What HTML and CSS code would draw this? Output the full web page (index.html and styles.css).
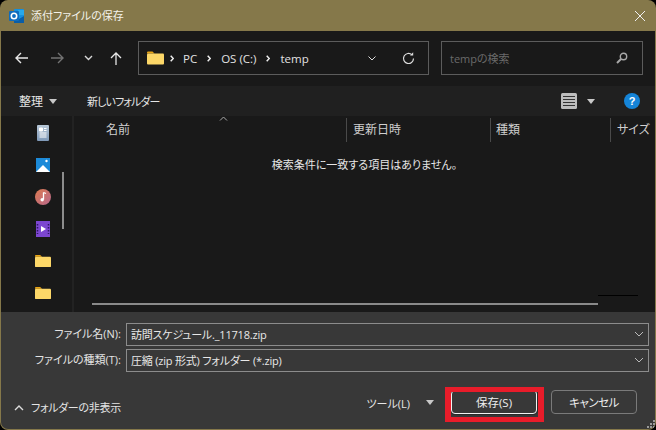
FILE: index.html
```html
<!DOCTYPE html>
<html lang="ja">
<head>
<meta charset="utf-8">
<title>添付ファイルの保存</title>
<link rel="stylesheet" href="styles.css">
</head>
<body>
<div class="window">
  <header class="titlebar">
    <svg class="app-icon" width="17" height="16" viewBox="0 0 17 16">
      <rect x="6" y="1" width="10" height="14" rx="1" fill="#1490df"/>
      <rect x="10" y="2" width="6" height="5" fill="#28a8ea"/>
      <path d="M6 8l5 3 5-3v7H6z" fill="#0a5ea8"/>
      <rect x="1" y="3" width="10" height="10" rx="1" fill="#0f6cbd"/>
      <circle cx="6" cy="8" r="2.7" fill="none" stroke="#fff" stroke-width="1.6"/>
    </svg>
    <span class="title">添付ファイルの保存</span>
    <svg class="close" width="12" height="12" viewBox="0 0 12 12"><path d="M1 1l10 10M11 1L1 11" stroke="#f0f0f0" stroke-width="1"/></svg>
  </header>

  <nav class="navbar">
    <div class="nav-buttons">
      <svg class="nav-b" width="14" height="12" viewBox="0 0 14 12"><path d="M13 6H1M6 1L1 6l5 5" fill="none" stroke="#e8e8e8" stroke-width="1.4"/></svg>
      <svg class="nav-f" width="14" height="12" viewBox="0 0 14 12"><path d="M1 6h12M8 1l5 5-5 5" fill="none" stroke="#737373" stroke-width="1.4"/></svg>
      <svg class="nav-d" width="9" height="6" viewBox="0 0 9 6"><path d="M1 1l3.5 3.5L8 1" fill="none" stroke="#d8d8d8" stroke-width="1.4"/></svg>
      <svg class="nav-u" width="12" height="13" viewBox="0 0 12 13"><path d="M6 13V1M1 6l5-5 5 5" fill="none" stroke="#e8e8e8" stroke-width="1.3"/></svg>
    </div>
    <div class="address">
      <svg class="folder-sm" width="17" height="14" viewBox="0 0 17 14"><path d="M0 1.500Q0 .5 1 .5h4.500l2 2H0z" fill="#e8a415"/><rect y="2.500" width="17" height="11" rx="1" fill="#fcd768"/></svg>
      <svg class="crumb-sep first" width="4" height="7" viewBox="0 0 4 7"><path d="M.7.7L3.300 3.500.7 6.300" fill="none" stroke="#eee" stroke-width="1.500"/></svg>
      <span class="crumb">PC</span>
      <svg class="crumb-sep" width="4" height="7" viewBox="0 0 4 7"><path d="M.7.7L3.300 3.500.7 6.300" fill="none" stroke="#eee" stroke-width="1.500"/></svg>
      <span class="crumb">OS (C:)</span>
      <svg class="crumb-sep" width="4" height="7" viewBox="0 0 4 7"><path d="M.7.7L3.300 3.500.7 6.300" fill="none" stroke="#eee" stroke-width="1.500"/></svg>
      <span class="crumb">temp</span>
      <svg class="addr-chev" width="8" height="5" viewBox="0 0 8 5"><path d="M.5.5L4 4 7.500.5" fill="none" stroke="#ddd" stroke-width="1"/></svg>
      <svg class="refresh" width="13" height="13" viewBox="0 0 13 13"><path d="M11.500 6.500a5 5 0 1 1-1.600-3.700" fill="none" stroke="#ddd" stroke-width="1.200"/><path d="M8 3.400h3.200V.2z" fill="#ddd"/></svg>
    </div>
    <div class="search">
      <span class="search-text">tempの検索</span>
      <svg width="12" height="12" viewBox="0 0 12 12"><circle cx="7.500" cy="4.500" r="3.200" fill="none" stroke="#a8a8a8" stroke-width="1.400"/><path d="M5 7L1 11" stroke="#a8a8a8" stroke-width="2"/></svg>
    </div>
  </nav>

  <div class="toolbar">
    <span class="organize">整理</span><span class="arrow tb-arrow"></span>
    <span class="newfolder">新しいフォルダー</span>
    <svg class="view" width="16" height="16" viewBox="0 0 16 16"><rect width="16" height="16" rx="1.500" fill="#bdbdbd"/><path d="M2 3.500h12M2 6.500h12M2 9.500h12M2 12.500h12" stroke="#333" stroke-width="1"/></svg>
    <span class="arrow view-arrow"></span>
    <span class="help">?</span>
  </div>

  <main class="content">
    <aside class="sidebar">
      <div class="side-icons">
        <svg width="12" height="16" viewBox="0 0 12 16"><defs><linearGradient id="doc" x1="0" y1="0" x2="0" y2="1"><stop offset="0" stop-color="#b8c8d8"/><stop offset="1" stop-color="#7f99b8"/></linearGradient></defs><rect width="12" height="16" rx="1" fill="url(#doc)"/><path d="M2.500 3h3v3h-3zM7 3.500h2.500M7 5.500h2.500M2.500 8h7M2.500 10h7M2.500 12h7" stroke="#fff" fill="#fff" stroke-width="1"/></svg>
        <svg width="14" height="14" viewBox="0 0 14 14"><rect width="14" height="14" fill="#1c8ad8"/><path d="M0 14l7-7 7 7z" fill="#fff"/><circle cx="10.500" cy="3" r="1.200" fill="#fff"/></svg>
        <svg width="16" height="16" viewBox="0 0 16 16"><defs><linearGradient id="mus" x1="0" y1="0" x2="1" y2="1"><stop offset="0" stop-color="#dc7a50"/><stop offset="1" stop-color="#b8688c"/></linearGradient></defs><circle cx="8" cy="8" r="8" fill="url(#mus)"/><path d="M8.500 3.500v7" stroke="#fff" stroke-width="1.300"/><circle cx="7.200" cy="10.800" r="1.700" fill="#fff"/><path d="M8.500 3.500l2.500 1" stroke="#fff" stroke-width="1.300"/></svg>
        <svg width="14" height="16" viewBox="0 0 14 16"><rect width="14" height="16" fill="#7c46d0"/><path d="M5 5l5 3-5 3z" fill="#fff"/><path d="M1.500 3v10M12.500 3v10" stroke="#2d1463" stroke-width="1.500" stroke-dasharray="1.500 1.500"/></svg>
        <svg width="16" height="13" viewBox="0 0 17 14"><path d="M0 1.500Q0 .5 1 .5h4.500l2 2H0z" fill="#e8a415"/><rect y="2.500" width="17" height="11" rx="1" fill="#fcd768"/></svg>
        <svg width="16" height="13" viewBox="0 0 17 14"><path d="M0 1.500Q0 .5 1 .5h4.500l2 2H0z" fill="#e8a415"/><rect y="2.500" width="17" height="11" rx="1" fill="#fcd768"/></svg>
      </div>
      <div class="side-scroll"></div>
    </aside>
    <section class="files">
      <div class="col-header">
        <span class="col col-name">名前</span>
        <span class="col col-date">更新日時</span>
        <span class="col col-type">種類</span>
        <span class="col col-size">サイズ</span>
      </div>
      <svg class="sort" width="9" height="5" viewBox="0 0 9 5"><path d="M1 4.500L4.500 1 8 4.500" fill="none" stroke="#aaa" stroke-width="1"/></svg>
      <p class="empty">検索条件に一致する項目はありません。</p>
      <div class="h-scroll"><span class="thumb"></span><span class="black-line"></span></div>
    </section>
  </main>

  <footer class="bottom">
    <div class="field">
      <label class="label">ファイル名(N):</label>
      <div class="input"><span>訪問スケジュール._11718.zip</span><svg width="10" height="6" viewBox="0 0 10 6"><path d="M1 1l4 4 4-4" fill="none" stroke="#bbb"/></svg></div>
    </div>
    <div class="field">
      <label class="label">ファイルの種類(T):</label>
      <div class="input"><span>圧縮 (zip 形式) フォルダー (*.zip)</span><svg width="10" height="6" viewBox="0 0 10 6"><path d="M1 1l4 4 4-4" fill="none" stroke="#bbb"/></svg></div>
    </div>
    <div class="actions">
      <svg class="hide-chev" width="10" height="6" viewBox="0 0 10 6"><path d="M1 5l4-4 4 4" fill="none" stroke="#ddd" stroke-width="1.400"/></svg>
      <span class="hide-text">フォルダーの非表示</span>
      <span class="tools">ツール(L)</span>
      <span class="arrow tools-arrow"></span>
      <button class="btn btn-save">保存(S)</button>
      <button class="btn btn-cancel">キャンセル</button>
    </div>
    <div class="highlight"></div>
    <svg class="grip" width="8" height="8" viewBox="0 0 8 8"><path d="M6 0h2v2H6zM3 3h2v2H3zM6 3h2v2H6zM0 6h2v2H0zM3 6h2v2H3zM6 6h2v2H6z" fill="#9a9a9a"/></svg>
  </footer>
</div>
</body>
</html>
```

FILE: styles.css
```css
* { box-sizing: border-box; }
html, body { margin: 0; padding: 0; background: #000; }
body { width: 656px; height: 430px; overflow: hidden; font-family: "Open Sans", "Noto Sans CJK JP", sans-serif; font-size: 12px; color: #e6e6e6; font-feature-settings: "palt"; }
.window { width: 656px; height: 430px; display: flex; flex-direction: column; background: #85784a; border-radius: 8px; overflow: hidden; padding: 0 1px 1px; }

.titlebar { height: 31px; flex: none; display: flex; align-items: center; padding: 0 10px 0 8px; margin: 0 -1px; }
.title { margin-left: 6px; font-size: 11px; color: #f4f2ea; padding-bottom: 2px; }
.close { margin-left: auto; }

.navbar { height: 55px; flex: none; background: #191919; display: flex; align-items: center; padding: 0 13px 1px 14px; }
.nav-buttons { width: 123px; display: flex; align-items: center; flex: none; }
.nav-f { margin-left: 21px; }
.nav-d { margin-left: 20px; }
.nav-u { margin-left: 17px; }
.address { width: 291px; height: 34px; border: 1px solid #5c5c5c; display: flex; align-items: center; padding: 0 13px 0 8px; flex: none; }
.crumb { color: #e2e2e2; font-size: 11.500px; }
.crumb-sep { margin: 0 10px; flex: none; }
.crumb-sep.first { margin-left: 6px; margin-right: 9px; }
.addr-chev { margin-left: auto; }
.refresh { margin-left: 26px; }
.search { width: 202px; height: 34px; border: 1px solid #5c5c5c; margin-left: 12px; display: flex; align-items: center; justify-content: space-between; padding: 0 14px 0 8px; flex: none; }
.search-text { color: #6a6a6a; font-size: 11px; }

.toolbar { height: 30px; flex: none; background: #202020; display: flex; align-items: center; padding: 0 15px 0 18px; }
.organize { font-size: 12px; padding-bottom: 1px; }
.arrow { display: inline-block; width: 0; height: 0; border-left: 4.500px solid transparent; border-right: 4.500px solid transparent; border-top: 5px solid #c8c8c8; flex: none; }
.tb-arrow { margin-left: 6px; }
.newfolder { margin-left: 30px; font-size: 11px; letter-spacing: -.9px; padding-bottom: 1px; }
.view { margin-left: auto; }
.view-arrow { margin-left: 10px; }
.help { margin-left: 29px; width: 16px; height: 16px; border-radius: 50%; background: #1584d8; color: #fff; font: 700 11px/16px "Liberation Sans", sans-serif; text-align: center; }

.content { height: 196px; flex: none; background: #191919; display: flex; }
.sidebar { width: 73px; flex: none; border-right: 2px solid #222; display: flex; }
.side-icons { width: 61px; padding-top: 9px; padding-left: 22px; display: flex; flex-direction: column; flex: none; align-items: center; height: 196px; }
.side-icons svg { height: 16px; flex: none; margin-bottom: 16px; }
.side-scroll { width: 2px; height: 57px; background: #8c8c8c; margin-top: 56px; }
.files { flex: 1; display: flex; flex-direction: column; min-width: 0; position: relative; }
.col-header { height: 26px; display: grid; grid-template-columns: 273px 144px 120px 1fr; flex: none; padding-top: 2px; }
.col { font-size: 12px; color: #cfcfcf; padding-left: 5px; border-right: 1px solid #4a4a4a; line-height: 24px; height: 24px; overflow: hidden; white-space: nowrap; }
.col-name { padding-left: 32px; }
.col-date { padding-left: 6px; }
.col-size { border-right: 0; padding-left: 6px; }
.sort { position: absolute; left: 145px; top: 0; }
.empty { margin: 13px 0 0; font-size: 11px; color: #e6e6e6; text-align: center; width: 581px; line-height: 20px; }
.h-scroll { margin-top: auto; margin-bottom: 7px; margin-left: 18px; display: flex; align-items: flex-start; }
.thumb { width: 506px; height: 2px; background: #8a8a8a; }
.black-line { width: 40px; height: 1px; background: #000; margin-top: -8px; }

.bottom { flex: 1; background: #383838; padding: 11px 6px 0 0; position: relative; border-radius: 0 0 7px 7px; }
.field { display: flex; align-items: center; margin-bottom: 3px; height: 23px; }
.label { width: 120px; text-align: right; font-size: 11px; color: #e4e4e4; flex: none; padding-bottom: 3px; }
.input { margin-left: 5px; width: 523px; height: 23px; border: 1px solid #8c8c8c; display: flex; align-items: center; justify-content: space-between; padding: 0 4px 2px; font-size: 11px; letter-spacing: -.2px; color: #e8e8e8; }
.actions { display: flex; align-items: center; margin-top: 18px; height: 24px; padding-left: 13px; padding-right: 12px; }
.hide-chev { flex: none; margin-top: 12px; }
.hide-text { margin-left: 7px; font-size: 11px; letter-spacing: -.3px; color: #e4e4e4; margin-top: 10px; }
.tools { margin-left: auto; font-size: 11px; padding-top: 1px; }
.tools-arrow { margin-left: 16px; }
.btn { width: 86px; height: 24px; border-radius: 4px; font: 11.500px "Open Sans", "Noto Sans CJK JP", sans-serif; font-feature-settings: "palt"; color: #eee; background: #383838; padding: 0; }
.btn-save { margin-left: 17px; border: 1px solid #f2f2f2; box-shadow: 0 0 0 1px #2a2a2a; }
.btn-cancel { margin-left: 14px; border: 1px solid #7a7a7a; letter-spacing: -.5px; }
.highlight { position: absolute; left: 444px; top: 75px; width: 99px; height: 35px; border: 5px solid #e81c2a; border-left-width: 6px; border-right-width: 6px; pointer-events: none; }
.grip { position: absolute; right: 0; bottom: 1px; }
```
